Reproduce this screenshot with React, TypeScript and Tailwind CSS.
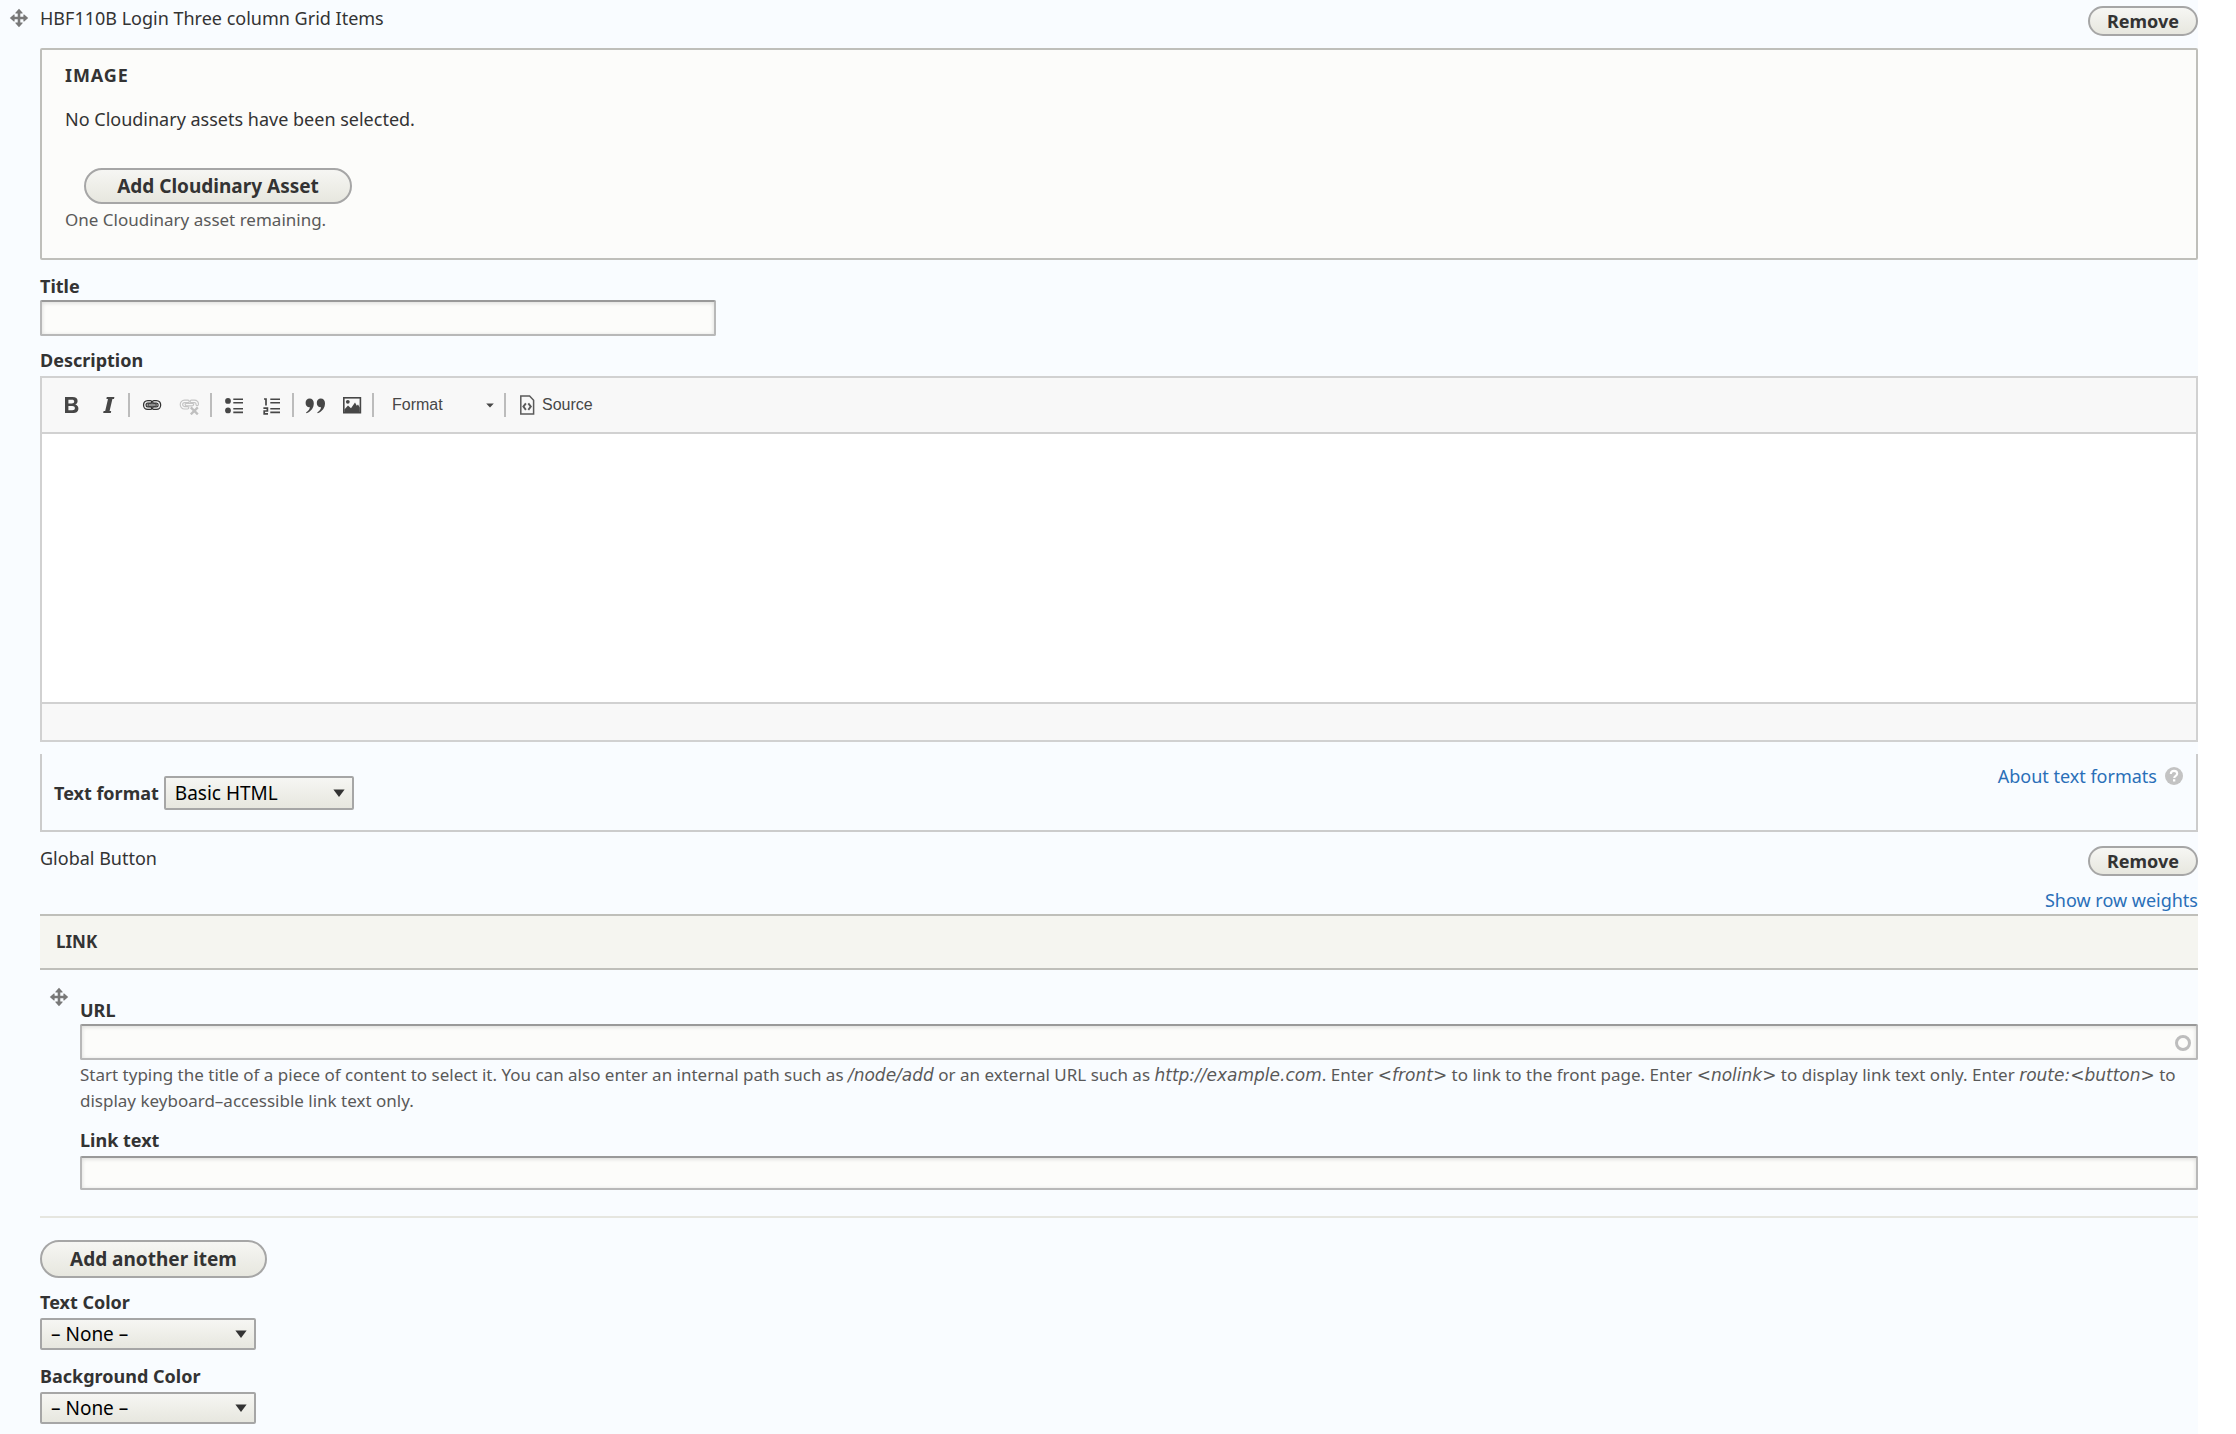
import React from "react";

function DragHandle() {
  return (
    <button type="button" aria-label="Drag to re-order" className="block size-5 cursor-move">
      <svg viewBox="0 0 20 20" className="size-5" fill="#787878" aria-hidden="true">
        <path d="M10 0.8 L13.6 4.8 V5.6 H11.3 V8.7 H14.4 V6.4 H15.2 L19.2 10 L15.2 13.6 H14.4 V11.3 H11.3 V14.4 H13.6 V15.2 L10 19.2 L6.4 15.2 V14.4 H8.7 V11.3 H5.6 V13.6 H4.8 L0.8 10 L4.8 6.4 H5.6 V8.7 H8.7 V5.6 H6.4 V4.8 Z" />
      </svg>
    </button>
  );
}

const pill =
  "rounded-full border-2 border-[#a6a6a6] bg-linear-to-b from-[#f6f6f3] to-[#e7e7df] font-bold text-[#333333]";

function RemoveButton() {
  return (
    <button type="button" className={`${pill} h-[30px] px-[17px] text-lg leading-6`}>
      Remove
    </button>
  );
}

function TextInput({ id, className = "" }: { id: string; className?: string }) {
  return (
    <input
      id={id}
      type="text"
      className={`block rounded-xs border-2 border-[#b8b8b8] border-t-[#999999] bg-[#fcfcfa] px-3 text-lg shadow-[inset_0_1px_4px_rgba(0,0,0,0.14)] ${className}`}
    />
  );
}

function Select({ id, option, className = "" }: { id: string; option: string; className?: string }) {
  return (
    <div className={`relative ${className}`}>
      <select
        id={id}
        className="size-full appearance-none rounded-xs border-2 border-[#a6a6a6] bg-linear-to-b from-[#f6f6f3] to-[#e7e7df] pl-[9px] text-[19px] leading-6 text-black"
      >
        <option>{option}</option>
      </select>
      <svg viewBox="0 0 12 8" className="pointer-events-none absolute right-[9px] top-1/2 h-2 w-3 -translate-y-1/2" fill="#333" aria-hidden="true">
        <path d="M0.4 0.5 H11.6 L6 8 Z" />
      </svg>
    </div>
  );
}

function Label({ htmlFor, children }: { htmlFor: string; children: React.ReactNode }) {
  return (
    <label htmlFor={htmlFor} className="block text-lg leading-7 font-bold">
      {children}
    </label>
  );
}

function Em({ children }: { children: React.ReactNode }) {
  return <em className="font-['DejaVu_Sans',Verdana,sans-serif]">{children}</em>;
}

function Separator() {
  return <span className="h-6 w-[2px] bg-[#bcbcbc]" />;
}

function Tool({ label, className, children }: { label: string; className: string; children: React.ReactNode }) {
  return (
    <button type="button" aria-label={label} className={`h-5 w-5 ${className}`}>
      <svg viewBox="0 0 20 20" className="size-5" fill="#474747" aria-hidden="true">
        {children}
      </svg>
    </button>
  );
}

function Toolbar() {
  return (
    <div role="toolbar" aria-label="Editor toolbar" className="flex h-[56px] items-center border-b-2 border-[#d1d1d1] bg-[#f8f8f8] pl-5">
      <Tool label="Bold" className="">
        <path
          fillRule="evenodd"
          d="M3 2 H10.5 C14 2 15.6 3.6 15.6 6 C15.6 7.8 14.6 9 13.2 9.5 C15.2 10 16.4 11.4 16.4 13.4 C16.4 16.4 14.2 18 10.8 18 H3 Z M6.4 4.7 V8.4 H9.8 C11.4 8.4 12.2 7.7 12.2 6.5 C12.2 5.2 11.4 4.7 9.8 4.7 Z M6.4 11 V15.3 H10.2 C12 15.3 12.9 14.6 12.9 13.1 C12.9 11.7 12 11 10.2 11 Z"
        />
      </Tool>
      <Tool label="Italic" className="ml-[17px]">
        <path d="M7.8 2 H15.4 L15 4 H13.4 L10.6 16 H12.2 L11.8 18 H4.2 L4.6 16 H6.2 L9 4 H7.4 Z" />
      </Tool>
      <span className="w-[9px]" />
      <Separator />
      <Tool label="Link" className="ml-3">
        <g fill="none" strokeLinecap="round">
          <g stroke="#333" strokeWidth="3.8">
            <path d="M8.4 6.8 H5.8 C1.8 6.8 1.8 13.2 5.8 13.2 H8.4" />
            <path d="M11.8 6.8 H14.4 C18.4 6.8 18.4 13.2 14.4 13.2 H11.8" />
          </g>
          <g stroke="#ededed" strokeWidth="1.3">
            <path d="M8.4 6.8 H5.8 C1.8 6.8 1.8 13.2 5.8 13.2 H8.4" />
            <path d="M11.8 6.8 H14.4 C18.4 6.8 18.4 13.2 14.4 13.2 H11.8" />
          </g>
          <path stroke="#333" strokeWidth="3.4" d="M7 10 H13.2" />
          <path stroke="#ededed" strokeWidth="1.1" d="M7 10 H13.2" />
        </g>
      </Tool>
      <Tool label="Unlink" className="ml-[17px]">
        <g fill="none" strokeLinecap="round">
          <g stroke="#c4c4c4" strokeWidth="3.6">
            <path d="M9 6.4 H5.6 C1.4 6.4 1.4 12.8 5.6 12.8 H8.6" />
            <path d="M12.4 6.4 H15.2 C17.4 6.4 18.4 7.8 18.2 9.4" />
            <path d="M7.4 9.6 H13.4" />
          </g>
          <g stroke="#f8f8f8" strokeWidth="1.3">
            <path d="M9 6.4 H5.6 C1.4 6.4 1.4 12.8 5.6 12.8 H8.6" />
            <path d="M12.4 6.4 H15.2 C17.4 6.4 18.4 7.8 18.2 9.4" />
            <path d="M7.4 9.6 H13.4" />
          </g>
          <path stroke="#c0c0c0" strokeWidth="2.3" strokeLinecap="butt" d="M11.8 12.4 L18.8 19.4 M18.8 12.4 L11.8 19.4" />
        </g>
      </Tool>
      <span className="w-[11px]" />
      <Separator />
      <Tool label="Bulleted list" className="ml-3">
        <circle cx="4" cy="5.9" r="2.9" />
        <circle cx="4" cy="15.4" r="2.9" />
        <path d="M9.3 3.4 H19 V5 H9.3 Z M9.3 7 H19 V8.6 H9.3 Z M9.3 13 H19 V14.6 H9.3 Z M9.3 16.6 H19 V18.2 H9.3 Z" />
      </Tool>
      <Tool label="Numbered list" className="ml-[17px]">
        <path d="M9.3 3.4 H19 V5 H9.3 Z M9.3 7 H19 V8.6 H9.3 Z M9.3 13 H19 V14.6 H9.3 Z M9.3 16.6 H19 V18.2 H9.3 Z" />
        <path fill="none" stroke="#474747" strokeWidth="1.7" d="M3 4 H5 V10.4 M2.4 13.2 H6.4 V16 H3.2 V18.9 H7" />
      </Tool>
      <span className="w-[11px]" />
      <Separator />
      <Tool label="Block quote" className="ml-[11px]">
        <path d="M4.6 3.6 C7 3.6 8.8 5.3 8.8 8.2 C8.8 12.6 6.4 16.2 1.6 18.2 L1 17.4 C3.4 15.8 4.8 14 4.9 12.2 C2.2 12.4 0.6 10.6 0.6 8 C0.6 5.3 2.3 3.6 4.6 3.6 Z" />
        <path d="M15.8 3.6 C18.2 3.6 20 5.3 20 8.2 C20 12.6 17.6 16.2 12.8 18.2 L12.2 17.4 C14.6 15.8 16 14 16.1 12.2 C13.4 12.4 11.8 10.6 11.8 8 C11.8 5.3 13.5 3.6 15.8 3.6 Z" />
      </Tool>
      <Tool label="Image" className="ml-[17px]">
        <rect x="1.8" y="2.8" width="16.6" height="14.9" fill="#f8f8f8" stroke="#474747" strokeWidth="1.6" />
        <circle cx="5.8" cy="6.8" r="1.9" />
        <path d="M2.4 17 V14.6 L6 10.6 L9 13.2 L13 7.6 L14.8 10.8 L16 9.4 L17.8 12.4 V17.2 H2.4 Z" />
      </Tool>
      <span className="w-[10px]" />
      <Separator />
      <button type="button" className="ml-[18px] flex w-[102px] items-center justify-between font-['Liberation_Sans',Arial,sans-serif] text-base text-[#474747]">
        Format
        <svg viewBox="0 0 8 5" className="h-[5px] w-2" fill="#474747" aria-hidden="true">
          <path d="M0.2 0.4 H7.8 L4 4.6 Z" />
        </svg>
      </button>
      <span className="w-[10px]" />
      <Separator />
      <button type="button" className="ml-3 flex items-center gap-1 font-['Liberation_Sans',Arial,sans-serif] text-base text-[#474747]">
        <svg viewBox="0 0 20 20" className="size-5" fill="none" stroke="#5a5a5a" strokeWidth="1.5" aria-hidden="true">
          <path d="M2.8 1 H11.6 L15.6 5.2 V19 H2.8 Z" />
          <path d="M7.9 8.4 L5.4 11.6 L7.9 14.8 M10.3 8.4 L12.8 11.6 L10.3 14.8" strokeWidth="1.9" />
        </svg>
        Source
      </button>
    </div>
  );
}

export default function App() {
  return (
    <div className="min-h-screen bg-white pr-[38px] font-['Noto_Sans','Open_Sans',sans-serif] text-lg text-[#333333]">
      <div className="flex min-h-screen bg-[#f9fcff]">
        <div className="w-10 shrink-0 pt-2 pl-[9px]">
          <DragHandle />
        </div>
        <main className="min-w-0 flex-1">
          <div className="flex h-12 items-start justify-between pt-[6px]">
            <div className="leading-6">HBF110B Login Three column Grid Items</div>
            <RemoveButton />
          </div>

          <fieldset className="h-[212px] rounded-xs border-2 border-[#bfbfba] bg-[#fcfcfa] px-[23px] pt-[13px]">
            <div className="leading-6 font-bold tracking-wider">IMAGE</div>
            <p className="mt-5 leading-6">No Cloudinary assets have been selected.</p>
            <button type="button" className={`${pill} mt-[37px] ml-[19px] block h-9 min-w-[268px] px-7 text-[19px] leading-7`}>
              Add Cloudinary Asset
            </button>
            <div className="mt-1 text-[17px] leading-6 text-[#595959]">One Cloudinary asset remaining.</div>
          </fieldset>

          <div className="pt-3">
            <Label htmlFor="title">Title</Label>
            <TextInput id="title" className="h-9 w-[676px]" />
          </div>

          <div className="pt-[10px]">
            <Label htmlFor="description">Description</Label>
            <div className="mt-[2px] border-2 border-[#d1d1d1]">
              <Toolbar />
              <textarea id="description" className="block h-[268px] w-full resize-none bg-white p-5" />
              <div className="h-[38px] border-t-2 border-[#d1d1d1] bg-[#f8f8f8]" />
            </div>
          </div>

          <div className="mt-3 flex h-[78px] items-start justify-between border-2 border-t-0 border-[#cccccc] pr-[13px] pl-3">
            <div className="mt-[22px] flex items-center gap-[5px]">
              <Label htmlFor="format">Text format</Label>
              <Select id="format" option="Basic HTML" className="h-[34px] w-[190px]" />
            </div>
            <a href="#formats" className="mt-[10px] flex items-center gap-2 leading-6 text-[#2a6fb8]">
              About text formats
              <svg viewBox="0 0 18 18" className="size-[18px]" aria-hidden="true">
                <circle cx="9" cy="9" r="9" fill="#c3c3c3" />
                <path d="M5.8 7 C5.8 4.8 7.2 3.9 9 3.9 C10.8 3.9 12.2 4.9 12.2 6.7 C12.2 8.8 9.2 8.8 9.2 11" fill="none" stroke="#fff" strokeWidth="2.1" />
                <rect x="8" y="12.2" width="2.3" height="2.3" fill="#fff" />
              </svg>
            </a>
          </div>

          <div className="flex items-start justify-between pt-[14px]">
            <div className="leading-6">Global Button</div>
            <RemoveButton />
          </div>

          <div className="mt-3 flex h-[26px] justify-end">
            <a href="#weights" className="leading-6 text-[#2a6fb8]">
              Show row weights
            </a>
          </div>

          <table className="w-full border-separate border-spacing-0">
            <thead>
              <tr>
                <th colSpan={2} className="h-14 border-y-2 border-[#bfbfba] bg-[#f5f5f0] px-4 text-left text-[17px] font-bold">
                  LINK
                </th>
              </tr>
            </thead>
            <tbody>
              <tr>
                <td className="w-10 border-b-2 border-[#e6e6e0] pt-[17px] pl-[9px] align-top">
                  <DragHandle />
                </td>
                <td className="border-b-2 border-[#e6e6e0] py-[26px] align-top">
                  <Label htmlFor="url">URL</Label>
                  <div className="relative">
                    <TextInput id="url" className="h-9 w-full" />
                    <span className="pointer-events-none absolute top-[11px] right-[7px] size-4 rounded-full border-[3px] border-[#bdbdbd]" />
                  </div>
                  <p className="mt-[2px] text-[17px] leading-[26px] text-[#595959]">
                    Start typing the title of a piece of content to select it. You can also enter an internal path such as{" "}
                    <Em>/node/add</Em> or an external URL such as <Em>http://example.com</Em>. Enter{" "}
                    <Em>&lt;front&gt;</Em> to link to the front page. Enter <Em>&lt;nolink&gt;</Em> to display link text
                    only. Enter <Em>route:&lt;button&gt;</Em> to display keyboard–accessible link text only.
                  </p>
                  <div className="pt-3">
                    <Label htmlFor="link-text">Link text</Label>
                    <TextInput id="link-text" className="mt-[2px] h-[34px] w-full" />
                  </div>
                </td>
              </tr>
            </tbody>
          </table>

          <button type="button" className={`${pill} mt-[22px] block h-[38px] px-7 text-[19px] leading-7`}>
            Add another item
          </button>

          <div className="pt-[10px]">
            <Label htmlFor="text-color">Text Color</Label>
            <Select id="text-color" option="– None –" className="mt-[2px] h-8 w-[216px]" />
          </div>
          <div className="pt-3">
            <Label htmlFor="background-color">Background Color</Label>
            <Select id="background-color" option="– None –" className="mt-[2px] h-8 w-[216px]" />
          </div>
        </main>
      </div>
    </div>
  );
}
